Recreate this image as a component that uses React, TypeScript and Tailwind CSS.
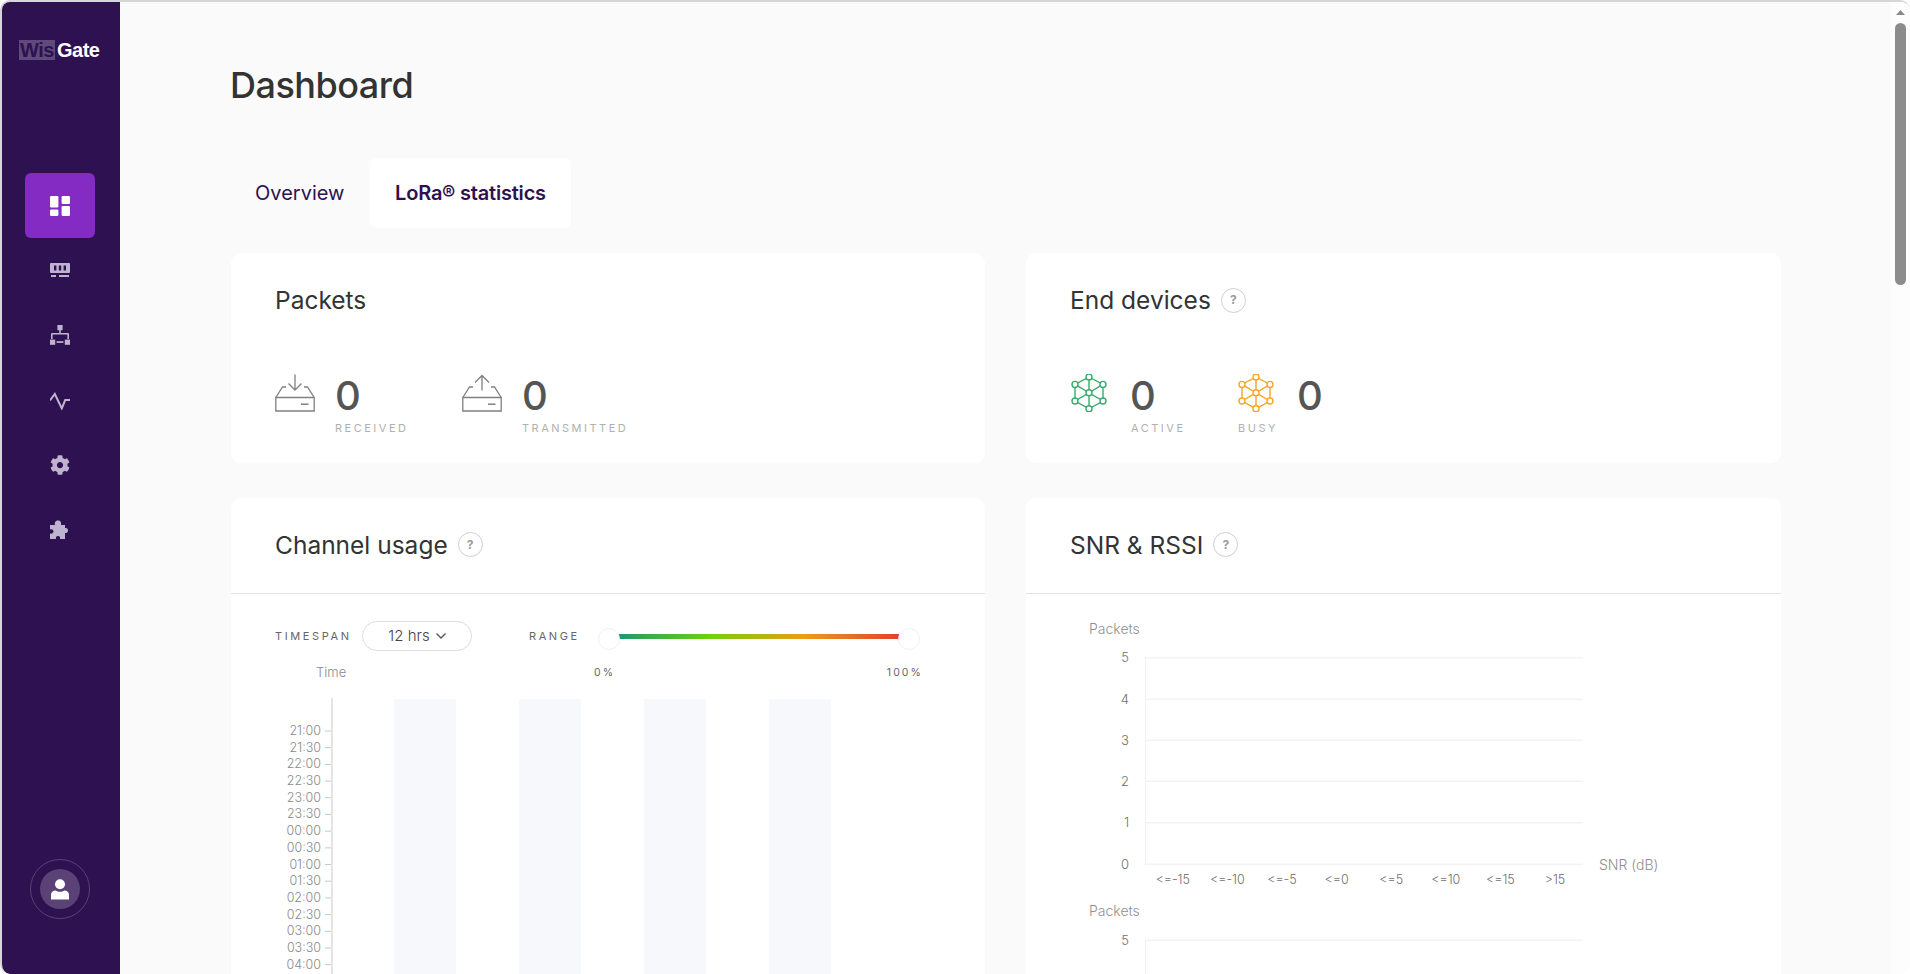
import React from "react";
import { FaCog } from "react-icons/fa";

const times = ["21:00","21:30","22:00","22:30","23:00","23:30","00:00","00:30","01:00","01:30","02:00","02:30","03:00","03:30","04:00"];
const snr = ["<=-15","<=-10","<=-5","<=0","<=5","<=10","<=15",">15"];

function DashIcon() {
  return (
    <svg width="20" height="20" viewBox="0 0 20 20" fill="#fff">
      <rect x="0" y="0" width="8.4" height="11.4" rx="1.2" />
      <rect x="0" y="13.4" width="8.4" height="6.6" rx="1.2" />
      <rect x="11.6" y="0" width="8.4" height="8" rx="1.2" />
      <rect x="11.6" y="10" width="8.4" height="10" rx="1.2" />
    </svg>
  );
}
function DeviceIcon() {
  return (
    <svg width="20" height="20" viewBox="0 0 20 20" fill="#bfb3cf">
      <path d="M1 3h18a1 1 0 0 1 1 1v8a1 1 0 0 1-1 1H1a1 1 0 0 1-1-1V4a1 1 0 0 1 1-1z" />
      <rect x="4" y="5.5" width="2.4" height="5" fill="#2e1150" />
      <rect x="8.8" y="5.5" width="2.4" height="5" fill="#2e1150" />
      <rect x="13.6" y="5.5" width="2.4" height="5" fill="#2e1150" />
      <rect x="1" y="15" width="5" height="2" />
      <rect x="9" y="15" width="10" height="2" />
    </svg>
  );
}
function TreeIcon() {
  return (
    <svg width="20" height="20" viewBox="0 0 20 20" fill="#bfb3cf">
      <rect x="7.4" y="0" width="5.2" height="5.2" />
      <path d="M9.2 5h1.6v3H18a1 1 0 0 1 1 1v5h-1.6v-4.4H2.6V14H1V9a1 1 0 0 1 1-1h7.2z" />
      <rect x="0" y="14.6" width="5.2" height="5.2" />
      <rect x="14.8" y="14.6" width="5.2" height="5.2" />
      <rect x="6.6" y="16.2" width="6.8" height="1.7" />
    </svg>
  );
}
function PulseIcon() {
  return (
    <svg width="20" height="20" viewBox="0 0 20 20" fill="none" stroke="#bfb3cf" strokeWidth="2">
      <path d="M0 10.4l4.8-6.4 7 14.4 3.4-8.4H20" />
    </svg>
  );
}
function PuzzleIcon() {
  return (
    <svg width="20" height="20" viewBox="0 0 20 20" fill="#bfb3cf">
      <path d="M0 5H5C4.500 3 5 .500 8 .500C11 .500 11.500 3 11 5H15V8C17 7.500 18 9 18 10.500C18 12 17 13.500 15 13V19H10C10.500 17 9.500 16 8 16C6.500 16 5.500 17 6 19H0V13.500C2 14 3.500 13 3.500 11.500C3.500 10 2 9 0 9.500Z" />
    </svg>
  );
}
function UserIcon() {
  return (
    <svg width="18" height="21" viewBox="0 0 18 21" fill="#fff">
      <circle cx="9" cy="5.2" r="5" />
      <path d="M0 20.4v-4.6c0-2.6 2-4.4 4.6-4.4 1.2.9 2.8 1.3 4.4 1.3s3.200-.4 4.400-1.300c2.600 0 4.600 1.800 4.600 4.400v4.600z" />
    </svg>
  );
}

function TrayIcon({ up }: { up?: boolean }) {
  return (
    <svg width="40" height="38" viewBox="0 0 40 38" fill="none" stroke="#808080" strokeWidth="1.3">
      <path d="M.8 23.500h38.400v13.500H.8z" />
      <path d="M.8 23.500L7.500 13H11" />
      <path d="M39.200 23.500L32.500 13H29" />
      <path d="M26 30.200h7.500" strokeWidth="1.5" />
      {up ? (
        <path d="M20 16.500V1.500M13 8.500l7-7 7 7" />
      ) : (
        <path d="M20 .5V16M13.500 9.500l6.500 6.500 6.500-6.500" />
      )}
    </svg>
  );
}

function NetIcon({ color }: { color: string }) {
  const pts: [number, number][] = [[18, 3], [4, 10.400], [32, 10.400], [18, 18.800], [4, 27], [32, 27], [18, 34.800]];
  return (
    <svg width="36" height="38" viewBox="0 0 36 38" fill="none" stroke={color} strokeWidth="1.4">
      <path d="M18 3L32 10.400V27L18 34.800L4 27V10.400Z" />
      <path d="M4 10.400L18 18.800L32 10.400M4 27L18 18.800L32 27M18 3V34.800" />
      {pts.map(([x, y], i) => (
        <circle key={i} cx={x} cy={y} r="3" fill="#fff" />
      ))}
    </svg>
  );
}

function Help() {
  return (
    <span className="flex h-[25px] w-[25px] items-center justify-center rounded-full border-[1.5px] border-[#cfcfcf] text-[12px] font-bold leading-none text-[#9a9a9a]">
      ?
    </span>
  );
}

function Stat({ icon, value, label, gap, labelUnderIcon, width }: { icon: React.ReactNode; value: string; label: string; gap: string; labelUnderIcon?: boolean; width: string }) {
  return (
    <div className={width}>
      <div className={`flex items-center ${gap}`}>
        {icon}
        <span className="h-[38px] text-[40px] font-medium leading-[43px] text-[#555555]">{value}</span>
      </div>
      <div className={`mt-[9px] text-[11px] font-normal leading-[14px] tracking-[2.500px] text-[#b0b0b0] ${labelUnderIcon ? "" : "pl-[60px]"}`}>
        {label}
      </div>
    </div>
  );
}

function ChannelChart() {
  return (
    <svg width="754" height="276" className="block font-['Inter']">
      {[163, 288, 413, 538].map((x) => (
        <rect key={x} x={x} y="1" width="62" height="275" fill="#f7f8fc" />
      ))}
      <rect x="100" y="0" width="2" height="276" fill="#e4e4e4" />
      {times.map((t, i) => {
        const y = 32.5 + i * 16.69;
        return (
          <g key={t}>
            <text x="90" y={y + 4.500} textAnchor="end" fontSize="12.500" fontWeight="300" fill="#8a8a8a">{t}</text>
            <rect x="94" y={y} width="6" height="1" fill="#c8c8c8" />
          </g>
        );
      })}
    </svg>
  );
}

function SnrChart() {
  const ys = [63.500, 105, 146, 187, 228.500, 270];
  return (
    <svg width="755" height="400" className="block font-['Inter']">
      <text x="63" y="40" fontSize="14" fontWeight="300" fill="#8f8f8f">Packets</text>
      {ys.map((y, i) => (
        <g key={y}>
          <rect x="119" y={y - 0.5} width="438" height="1.500" fill="#f3f3f3" />
          <text x="103" y={y + 4.500} textAnchor="end" fontSize="13" fontWeight="300" fill="#6f6f6f">{5 - i}</text>
        </g>
      ))}
      <rect x="119" y="63" width="1" height="208" fill="#f0f0f0" />
      {snr.map((s, i) => (
        <text key={s} x={146.800 + i * 54.600} y="289.500" textAnchor="middle" fontSize="12.500" fontWeight="300" fill="#6f6f6f">{s}</text>
      ))}
      <text x="573" y="276" fontSize="14" fontWeight="300" fill="#8f8f8f">SNR (dB)</text>
      <text x="63" y="322" fontSize="14" fontWeight="300" fill="#8f8f8f">Packets</text>
      <rect x="119" y="345.500" width="438" height="1.500" fill="#f3f3f3" />
      <text x="103" y="350.500" textAnchor="end" fontSize="13" fontWeight="300" fill="#6f6f6f">5</text>
      <rect x="119" y="346" width="1" height="54" fill="#f0f0f0" />
    </svg>
  );
}

const navItems = [<DeviceIcon key="d" />, <TreeIcon key="t" />, <PulseIcon key="p" />, <FaCog key="c" size={20} color="#bfb3cf" />, <PuzzleIcon key="z" />];

export default function App() {
  return (
    <div className="h-[974px] w-[1910px] overflow-hidden bg-white font-['Inter',sans-serif]">
      <div className="flex h-full overflow-hidden rounded-[10px] border-l-2 border-t-2 border-[#d6d6d6] bg-[#fafafa]">
        <aside className="flex w-[118px] shrink-0 flex-col items-center bg-[#2e1150] pr-[2px]">
          <div className="mt-[38px] flex h-[20px] w-full items-center pl-[17px] font-['Liberation_Sans'] text-[20px] font-bold leading-none tracking-[-0.5px]">
            <span className="flex h-[20px] w-[36px] items-center justify-center bg-[#5f4a7c] text-[#2e1150]">Wis</span>
            <span className="ml-[2px] text-white">Gate</span>
          </div>
          <nav className="mt-[113px] flex flex-col items-center">
            <div className="flex h-[65px] w-[70px] items-center justify-center rounded-md bg-[#842bc4]">
              <DashIcon />
            </div>
            {navItems.map((icon, i) => (
              <div key={i} className="flex h-[65px] w-[70px] items-center justify-center pb-[2px]">
                {icon}
              </div>
            ))}
          </nav>
          <div className="mt-auto mb-[55px] flex h-[60px] w-[60px] items-center justify-center rounded-full border border-[#5a4277]">
            <div className="flex h-[40px] w-[40px] items-center justify-center rounded-full bg-[#5a4277]">
              <UserIcon />
            </div>
          </div>
        </aside>

        <main className="min-w-0 flex-1 pl-[111px] pr-[110px]">
          <h1 className="mt-[61px] -ml-px text-[36px] font-medium leading-[44px] tracking-[-0.5px] text-[#333333]">Dashboard</h1>
          <div className="mt-[51px] flex">
            <div className="flex h-[70px] w-[139px] items-center rounded-md pl-6 text-[20px] font-normal text-[#2e1150]">Overview</div>
            <div className="flex h-[70px] w-[201px] items-center justify-center rounded-md bg-white text-[20px] font-semibold tracking-[-0.2px] text-[#2e1150]">LoRa® statistics</div>
          </div>

          <div className="mt-[25px] grid grid-cols-[754px_755px] gap-x-[41px] gap-y-[35px]">
            <section className="h-[210px] rounded-[10px] bg-white pl-[44px]">
              <h2 className="pt-[32px] text-[24.5px] font-normal leading-[30px] text-[#333333]">Packets</h2>
              <div className="mt-[59px] flex">
                <Stat icon={<TrayIcon />} value="0" label="RECEIVED" gap="gap-[20px]" width="w-[187px]" />
                <Stat icon={<TrayIcon up />} value="0" label="TRANSMITTED" gap="gap-[20px]" width="w-[220px]" />
              </div>
            </section>

            <section className="h-[210px] rounded-[10px] bg-white pl-[44px]">
              <div className="flex items-center gap-[10px] pt-[32px]">
                <h2 className="text-[24.5px] font-normal leading-[30px] text-[#333333]">End devices</h2>
                <Help />
              </div>
              <div className="mt-[59px] flex pl-px">
                <Stat icon={<NetIcon color="#3aaa6b" />} value="0" label="ACTIVE" gap="gap-[23px]" width="w-[167px]" />
                <Stat icon={<NetIcon color="#f5a623" />} value="0" label="BUSY" gap="gap-[23px]" labelUnderIcon width="w-[150px]" />
              </div>
            </section>

            <section className="h-[600px] rounded-[10px] bg-white">
              <div className="flex h-[96px] items-center gap-[10px] border-b border-[#e2e2e2] pb-[2px] pl-[44px]">
                <h2 className="text-[24.5px] font-normal leading-[30px] text-[#333333]">Channel usage</h2>
                <Help />
              </div>
              <div className="flex items-center pl-[44px] pt-[27px]">
                <span className="w-[87px] text-[11px] leading-[14px] tracking-[2.600px] text-[#666666]">TIMESPAN</span>
                <button className="flex h-[30px] w-[110px] items-center justify-center gap-[6px] rounded-full border border-[#dddddd] text-[15px] font-light text-[#444444]">
                  12 hrs
                  <svg width="10" height="6" viewBox="0 0 10 6" fill="none" stroke="#555" strokeWidth="1.3"><path d="M.5.5L5 5 9.500.5" /></svg>
                </button>
                <span className="ml-[57px] w-[69px] text-[11px] leading-[14px] tracking-[2.600px] text-[#666666]">RANGE</span>
                <div className="mt-[6px] flex h-[22px] w-[322px] items-center">
                  <span className="z-10 h-[22px] w-[22px] shrink-0 rounded-full border border-[#f1f1f1] bg-white" />
                  <span className="-mx-px mb-[6px] h-[5px] flex-1 bg-[linear-gradient(90deg,#1d9a6c_0%,#72d00c_33%,#ed9b1b_66%,#e0432f_100%)]" />
                  <span className="z-10 h-[22px] w-[22px] shrink-0 rounded-full border border-[#f1f1f1] bg-white" />
                </div>
              </div>
              <div className="mt-[13px] flex h-[18px] items-center pl-[85px] pr-[62px]">
                <span className="w-[278px] text-[13px] font-light text-[#8a8a8a]">Time</span>
                <div className="flex flex-1 justify-between text-[10.500px] tracking-[2.100px] text-[#666666]">
                  <span>0%</span>
                  <span>100%</span>
                </div>
              </div>
              <div className="mt-[16px]">
                <ChannelChart />
              </div>
            </section>

            <section className="h-[600px] rounded-[10px] bg-white">
              <div className="flex h-[96px] items-center gap-[10px] border-b border-[#e2e2e2] pb-[2px] pl-[44px]">
                <h2 className="text-[24.5px] font-normal leading-[30px] text-[#333333]">SNR &amp; RSSI</h2>
                <Help />
              </div>
              <SnrChart />
            </section>
          </div>
        </main>

        <div className="flex w-[19px] shrink-0 flex-col items-center bg-[#fdfdfd] pr-[1px]">
          <svg width="9" height="5" viewBox="0 0 9 5" className="mt-[8px]" fill="#8a8a8a"><path d="M4.500 0L9 5H0z" /></svg>
          <div className="mt-[8px] h-[262px] w-[11px] rounded-full bg-[#8c8c8c]" />
        </div>
      </div>
    </div>
  );
}
